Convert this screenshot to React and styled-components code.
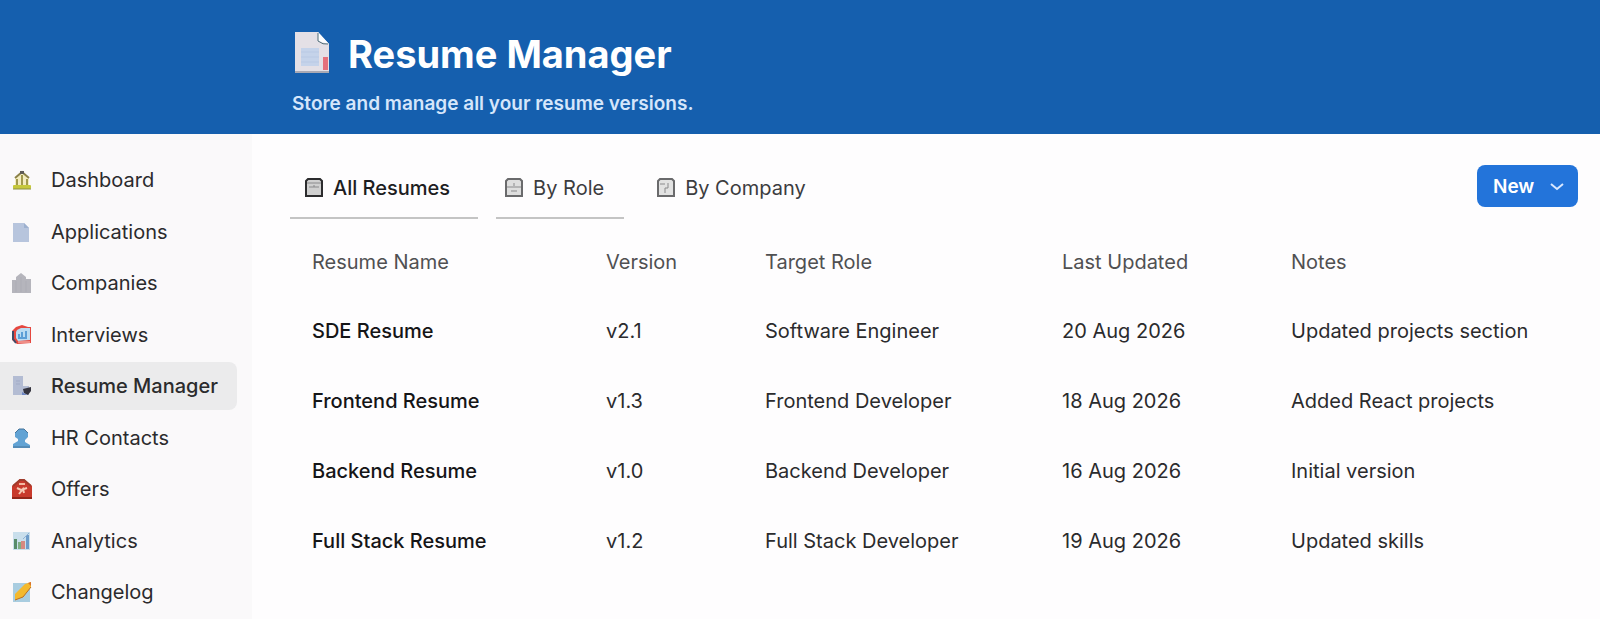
import React, { useState } from 'react'
import styled, { createGlobalStyle } from 'styled-components'

const colors = {
  banner: '#155fae',
  primary: '#2374da',
  sidebar: '#faf9fa',
  active: '#ebebec',
  text: '#2b2b2d',
  heading: '#505052',
  line: '#c4c4c4',
}

const GlobalStyle = createGlobalStyle`
  * {
    box-sizing: border-box;
  }

  body {
    margin: 0;
    background: #fefdfe;
    color: ${colors.text};
    font-family: Inter, 'Liberation Sans', sans-serif;
    font-size: 20px;
    line-height: 24px;
  }
`

const Page = styled.div`
  display: flex;
  flex-direction: column;
  min-height: 100vh;
`

const Banner = styled.header`
  padding: 30px 24px 18px 292px;
  background: ${colors.banner};
  color: white;
`

const BannerTitle = styled.h1`
  display: flex;
  align-items: flex-start;
  gap: 17px;
  margin: 0;
  font-size: 38px;
  font-weight: 700;
  line-height: 48px;
`

const BannerIcon = styled.svg`
  width: 39px;
  height: 44px;
`

const BannerText = styled.p`
  margin: 14px 0 0;
  color: #d5e6fb;
  font-size: 19px;
  font-weight: 600;
`

const Body = styled.div`
  display: flex;
  flex: 1;
`

const Sidebar = styled.nav`
  display: flex;
  flex: 0 0 252px;
  padding: 22px 15px 3px 0;
  background: ${colors.sidebar};
`

const NavList = styled.ul`
  display: flex;
  flex: 1;
  flex-direction: column;
  justify-content: space-between;
  margin: 0;
  padding: 0;
  list-style: none;
`

const NavLink = styled.a`
  display: flex;
  align-items: center;
  gap: 19px;
  height: 48px;
  padding-left: 12px;
  border-radius: 0 8px 8px 0;
  background: ${({ $active }) => ($active ? colors.active : 'transparent')};
  color: ${colors.text};
  font-weight: ${({ $active }) => ($active ? 500 : 400)};
  text-decoration: none;
`

const NavIcon = styled.svg`
  width: 20px;
  height: 20px;
`

const Content = styled.main`
  flex: 1;
  padding: 23px 22px 0 38px;
`

const Toolbar = styled.div`
  display: flex;
  justify-content: space-between;
  align-items: flex-start;
`

const Tabs = styled.div`
  display: flex;
  gap: 18px;
`

const Tab = styled.button`
  display: flex;
  align-items: center;
  gap: 9px;
  height: 62px;
  padding: ${({ $padding }) => $padding};
  border: 0;
  border-bottom: 2px solid ${({ $line }) => ($line ? colors.line : 'transparent')};
  background: none;
  color: ${({ $selected }) => ($selected ? '#1d1d1f' : '#3c3c3e')};
  font: inherit;
  font-weight: ${({ $selected }) => ($selected ? 500 : 400)};
  cursor: pointer;
`

const TabIcon = styled.svg`
  width: 20px;
  height: 20px;
`

const NewButton = styled.button`
  display: flex;
  align-items: center;
  justify-content: space-between;
  width: 101px;
  height: 42px;
  margin-top: 8px;
  padding: 2px 13px 0 16px;
  border: 0;
  border-radius: 8px;
  background: ${colors.primary};
  color: white;
  font: inherit;
  font-size: 19px;
  font-weight: 600;
  cursor: pointer;
`

const Chevron = styled.svg`
  width: 16px;
  height: 16px;
`

const Table = styled.table`
  width: 100%;
  margin-top: 9px;
  border-collapse: collapse;
  table-layout: fixed;
`

const Column = styled.col`
  width: ${({ $width }) => $width}px;
`

const HeadCell = styled.th`
  height: 68px;
  padding: 0 0 0 22px;
  color: ${colors.heading};
  font-weight: 400;
  text-align: left;
`

const Cell = styled.td`
  height: 70px;
  padding: 0 0 0 22px;
  white-space: nowrap;
`

const NameCell = styled(Cell)`
  color: #151517;
  font-weight: 500;
`

const DashboardIcon = () => (
  <>
    <path d="M3 8 L10 2 L17 8 V16 H3 Z" fill="#f3ecc0" />
    <path d="M3 8 L10 2 L17 8" fill="none" stroke="#8b8248" strokeWidth="2" />
    <path d="M5 9 V16 M10 5 V16 M15 9 V16" stroke="#a19a4c" strokeWidth="2" />
    <rect x="8" y="1" width="4" height="3" fill="#5d5a55" />
    <rect x="1" y="15" width="18" height="4" rx="1" fill="#c6c83c" />
    <path d="M1 19 H19" stroke="#8c9140" />
  </>
)

const ApplicationsIcon = () => (
  <>
    <path d="M1 1 H12 L17 6 V20 H1 Z" fill="#b7c5dd" />
    <path d="M12 1 V6 H17 Z" fill="#9db1cf" />
  </>
)

const CompaniesIcon = () => (
  <>
    <path d="M0 7 H4 V4 L9 0 L14 4 V6 H19 V20 H0 Z" fill="#b5b5bc" />
    <path d="M4 8 V19 M9 4 V19 M14 8 V19" stroke="#adadb5" />
  </>
)

const InterviewsIcon = () => (
  <>
    <path d="M4 2 L10 0 L16 2 H19 V18 L5 19 L0 15 V6 Z" fill="#e5473f" />
    <path d="M1 6 V14 L4 18" fill="none" stroke="#3f4a66" strokeWidth="2" />
    <path d="M5 5 L9 3 H18 V15 L6 16 L4 13 V7 Z" fill="#b9dcf2" />
    <path d="M7 14 V9 M10 7 V14 M14 6 V13 M7 13 H15" fill="none" stroke="#5b9fd6" strokeWidth="2" />
    <path d="M6 17 H18" stroke="#f08d86" strokeWidth="2" />
  </>
)

const ResumeIcon = () => (
  <>
    <path d="M1 0 H11 V10 H17 V19 H1 Z" fill="#b3bcd3" />
    <path d="M4 5 H8 M4 8 H8" stroke="#a1abc6" />
    <path d="M11 13 L19 11 V15 L16 19 L12 17 Z" fill="#34343f" />
    <path d="M10 16 L15 19 H10 Z" fill="#6c86c4" />
  </>
)

const ContactsIcon = () => (
  <>
    <path d="M3 5 L7 1 H12 L16 5 V9 L13 12 V14 L18 17 V20 H1 V16 L6 13 V11 L3 9 Z" fill="#62a3d4" />
    <path d="M3 5 L7 1 H12 L16 5 M1 19 H18" fill="none" stroke="#47759a" />
  </>
)

const OffersIcon = () => (
  <>
    <path d="M0 7 L8 0 H12 L20 7 V20 H0 Z" fill="#c83a2c" />
    <path d="M1 7 L8 1 H12 L19 7" fill="none" stroke="#9f3c2c" strokeWidth="2" />
    <path d="M7 5 H13" stroke="#f2b8a0" strokeWidth="2" />
    <path d="M5 9 L9 11 L15 9 M7 15 L11 10 L12 14" fill="none" stroke="#f6c9b4" strokeWidth="2" />
    <path d="M0 19 H20" stroke="#932619" strokeWidth="2" />
  </>
)

const AnalyticsIcon = () => (
  <>
    <rect x="1" y="1" width="17" height="18" fill="#c9dfec" />
    <rect x="2" y="8" width="3" height="10" fill="#588c69" />
    <rect x="6" y="11" width="3" height="7" fill="#7fae84" />
    <rect x="9" y="10" width="4" height="8" fill="#d68980" />
    <rect x="14" y="4" width="3" height="14" fill="#6d9cc9" />
    <path d="M11 8 L17 2" stroke="#8eb2d6" />
  </>
)

const ChangelogIcon = () => (
  <>
    <rect x="1" y="1" width="17" height="19" fill="#a9cde0" />
    <path d="M3 18 L3 12 L13 2 L19 0 V5 L11 15 Z" fill="#f4b92d" />
    <path d="M3 18 L11 15 L19 5" fill="none" stroke="#ba6f22" />
    <path d="M16 1 L19 0 V4 Z" fill="#d9752b" />
  </>
)

const navItems = [
  { label: 'Dashboard', Icon: DashboardIcon },
  { label: 'Applications', Icon: ApplicationsIcon },
  { label: 'Companies', Icon: CompaniesIcon },
  { label: 'Interviews', Icon: InterviewsIcon },
  { label: 'Resume Manager', Icon: ResumeIcon },
  { label: 'HR Contacts', Icon: ContactsIcon },
  { label: 'Offers', Icon: OffersIcon },
  { label: 'Analytics', Icon: AnalyticsIcon },
  { label: 'Changelog', Icon: ChangelogIcon },
]

const tabs = [
  { label: 'All Resumes', mark: 'M5 9 H15 M10 7 V9 M3 5 H17', fill: '#d0d0d0', line: true, padding: '2px 28px 0 14px' },
  { label: 'By Role', mark: 'M3 9 H17 M10 5 V8 M7 13 H13', fill: '#dedede', line: true, padding: '2px 20px 0 8px' },
  { label: 'By Company', mark: 'M4 6 H9 M12 5 V10 H9 V15', fill: '#e2e2e2', line: false, padding: '2px 14px 0 14px' },
]

const columns = [
  { label: 'Resume Name', width: 294 },
  { label: 'Version', width: 159 },
  { label: 'Target Role', width: 297 },
  { label: 'Last Updated', width: 229 },
  { label: 'Notes', width: 309 },
]

const resumes = [
  ['SDE Resume', 'v2.1', 'Software Engineer', '20 Aug 2026', 'Updated projects section'],
  ['Frontend Resume', 'v1.3', 'Frontend Developer', '18 Aug 2026', 'Added React projects'],
  ['Backend Resume', 'v1.0', 'Backend Developer', '16 Aug 2026', 'Initial version'],
  ['Full Stack Resume', 'v1.2', 'Full Stack Developer', '19 Aug 2026', 'Updated skills'],
]

const App = () => {
  const [page, setPage] = useState('Resume Manager')
  const [tab, setTab] = useState('All Resumes')

  return (
    <Page>
      <GlobalStyle />
      <Banner>
        <BannerTitle>
          <BannerIcon viewBox="0 0 39 44" aria-hidden="true">
            <path d="M3 2 H26 L37 14 V42 H3 Z" fill="#e4e0e6" />
            <path d="M26 2 V11 L37 14 Z" fill="#fbfdff" />
            <path d="M26 3 V11 Q31 15 36 14" fill="none" stroke="#4d6a76" />
            <rect x="9" y="18" width="18" height="18" fill="#c5d3ea" />
            <path d="M9 22 H27 M9 27 H27 M9 32 H27" stroke="#b9c9e4" />
            <rect x="31" y="27" width="5" height="13" fill="#e5707c" />
            <path d="M3 42 H37" stroke="#a9a9b4" strokeWidth="2" />
          </BannerIcon>
          Resume Manager
        </BannerTitle>
        <BannerText>Store and manage all your resume versions.</BannerText>
      </Banner>
      <Body>
        <Sidebar aria-label="Pages">
          <NavList>
            {navItems.map(({ label, Icon }) => (
              <li key={label}>
                <NavLink href="#" $active={page === label} onClick={() => setPage(label)}>
                  <NavIcon viewBox="0 0 20 20" aria-hidden="true">
                    <Icon />
                  </NavIcon>
                  {label}
                </NavLink>
              </li>
            ))}
          </NavList>
        </Sidebar>
        <Content>
          <Toolbar>
            <Tabs role="tablist">
              {tabs.map(({ label, mark, fill, line, padding }) => (
                <Tab
                  key={label}
                  role="tab"
                  aria-selected={tab === label}
                  $selected={tab === label}
                  $line={line}
                  $padding={padding}
                  onClick={() => setTab(label)}
                >
                  <TabIcon viewBox="0 0 20 20" aria-hidden="true">
                    <path
                      d="M2 3 L4 1 H16 L18 3 V18 H2 Z"
                      fill={fill}
                      stroke={tab === label ? '#2c2c2e' : '#6a6a6c'}
                      strokeWidth="2"
                    />
                    <path d={mark} fill="none" stroke="#8a8a8c" />
                  </TabIcon>
                  {label}
                </Tab>
              ))}
            </Tabs>
            <NewButton>
              New
              <Chevron viewBox="0 0 16 16" aria-hidden="true">
                <path d="M2 5 L8 10 L14 5" fill="none" stroke="#d9e8ff" strokeWidth="2" />
              </Chevron>
            </NewButton>
          </Toolbar>
          <Table>
            <colgroup>
              {columns.map(({ label, width }) => (
                <Column key={label} $width={width} />
              ))}
            </colgroup>
            <thead>
              <tr>
                {columns.map(({ label }) => (
                  <HeadCell key={label}>{label}</HeadCell>
                ))}
              </tr>
            </thead>
            <tbody>
              {resumes.map(([name, ...values]) => (
                <tr key={name}>
                  <NameCell>{name}</NameCell>
                  {values.map((value) => (
                    <Cell key={value}>{value}</Cell>
                  ))}
                </tr>
              ))}
            </tbody>
          </Table>
        </Content>
      </Body>
    </Page>
  )
}

export default App
